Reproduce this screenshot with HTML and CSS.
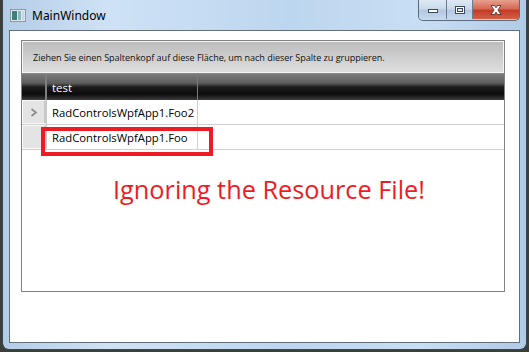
FILE: index.html
```html
<!DOCTYPE html>
<html>
<head>
<meta charset="utf-8">
<link rel="stylesheet" href="styles.css">
</head>
<body>
<div class="window">
  <div class="titlebar">
    <div class="title">
      <svg class="appicon" width="16" height="13" viewBox="0 0 16 13">
        <rect x="0.5" y="0.5" width="15" height="12" fill="#dfe6ec" stroke="#8a98a6"/>
        <rect x="2" y="2" width="5" height="9" fill="#3f7f78"/>
        <rect x="8" y="2" width="3" height="9" fill="#8fb4c7"/>
        <rect x="12" y="2" width="2" height="9" fill="#c7d6df"/>
      </svg>
      <span>MainWindow</span>
    </div>
    <div class="caption-buttons">
      <div class="cbtn min"><svg width="12" height="8" viewBox="0 0 12 8"><rect x="1.5" y="3.5" width="9" height="3" fill="#fff" stroke="#3a4a5c"/></svg></div>
      <div class="cbtn max"><svg width="12" height="10" viewBox="0 0 12 10"><rect x="1.5" y="1.5" width="9" height="7" fill="#fff" stroke="#3a4a5c"/><rect x="3.5" y="3.5" width="5" height="3" fill="#dfe8f2" stroke="#3a4a5c"/></svg></div>
      <div class="cbtn close"><svg width="16" height="12" viewBox="0 0 16 12"><path d="M3 1.5 L6.5 1.5 L8 3.8 L9.5 1.5 L13 1.5 L10 6 L13 10.5 L9.5 10.5 L8 8.2 L6.5 10.5 L3 10.5 L6 6 Z" fill="#fff" stroke="#4a2222" stroke-width="0.8" stroke-linejoin="round"/></svg></div>
    </div>
  </div>
  <div class="client">
    <div class="grid">
      <div class="grouppanel">Ziehen Sie einen Spaltenkopf auf diese Fläche, um nach dieser Spalte zu gruppieren.</div>
      <div class="header">
        <div class="ind hind"></div>
        <div class="hcell">test</div>
        <div class="hfill"></div>
      </div>
      <div class="row">
        <div class="ind rind"><svg width="8" height="9" viewBox="0 0 8 9"><path d="M1.5 1 L6 4.5 L1.5 8" fill="none" stroke="#8a8a8a" stroke-width="1.6"/></svg></div>
        <div class="cell">RadControlsWpfApp1.Foo2</div>
        <div class="fill"></div>
      </div>
      <div class="row">
        <div class="ind rind"></div>
        <div class="cell">RadControlsWpfApp1.Foo</div>
        <div class="fill"></div>
        <div class="mark"></div>
      </div>
      <div class="note">Ignoring the Resource File!</div>
    </div>
  </div>
</div>
</body>
</html>
```
FILE: styles.css
```css
html, body {
  margin: 0;
  padding: 0;
}
body {
  width: 529px;
  height: 352px;
  background: #3b3f3a;
  font-family: "Open Sans", "Noto Sans", sans-serif;
  overflow: hidden;
}
.window {
  box-sizing: border-box;
  margin-left: 2px;
  width: 525px;
  height: 350px;
  border: 1px solid #3c4652;
  border-top: none;
  border-radius: 0 0 7px 7px;
  background: linear-gradient(90deg, #b3cde6 0%, #cfe2f5 20%, #bcd6ef 55%, #c8def3 80%, #b0cbe6 100%);
  padding: 0 6px 6px 6px;
  display: flex;
  flex-direction: column;
}
.titlebar {
  height: 30px;
  display: flex;
  justify-content: space-between;
  align-items: flex-start;
}
.title {
  display: flex;
  align-items: center;
  gap: 6px;
  padding-top: 7px;
  padding-left: 1px;
  font-size: 12px;
  color: #000;
  font-family: "Noto Sans", sans-serif;
}
.appicon { display: block; }
.caption-buttons {
  display: flex;
  height: 20px;
  border: 1px solid #5b6b7e;
  border-top: none;
  border-radius: 0 0 5px 5px;
  overflow: hidden;
}
.cbtn {
  height: 19px;
  display: flex;
  align-items: center;
  justify-content: center;
  background: linear-gradient(#dfe9f5 0%, #c9d9ec 45%, #b4c8df 55%, #c6d8ee 100%);
}
.cbtn.min { width: 27px; border-right: 1px solid #6c7d92; }
.cbtn.max { width: 25px; border-right: 1px solid #6c7d92; }
.cbtn.close {
  width: 46px;
  background: linear-gradient(#e6a08f 0%, #d66a55 45%, #c23c26 55%, #d25f45 100%);
}
.client {
  flex: 1;
  background: #fff;
  border: 1px solid #636e7c;
  padding: 9px 14px 50px 11px;
  display: flex;
}
.grid {
  flex: 1;
  border: 1px solid #828282;
  position: relative;
  display: flex;
  flex-direction: column;
  font-family: "Open Sans", sans-serif;
}
.grouppanel {
  height: 30px;
  border: 1px solid #f4f4f4;
  background: linear-gradient(#bdbdbd, #dedede);
  font-size: 9.1px;
  color: #111;
  display: flex;
  align-items: center;
  padding-left: 10px;
  letter-spacing: -0.05px;
  white-space: nowrap;
}
.header {
  height: 27px;
  display: flex;
  background: linear-gradient(#7a7a7a 0%, #5e5e5e 35%, #1c1c1c 50%, #0c0c0c 78%, #3e3e3e 100%);
  border-top: 1px solid #8a8a8a;
  box-sizing: border-box;
}
.ind {
  width: 25px;
  flex: none;
  box-sizing: border-box;
}
.hind {
  border-right: 2px solid #7d7d7d;
}
.hcell {
  width: 151px;
  box-sizing: border-box;
  color: #fff;
  font-size: 11.5px;
  padding-left: 5px;
  display: flex;
  align-items: center;
  border-right: 1px solid #7a7a7a;
}
.hfill { flex: 1; }
.row {
  height: 25px;
  display: flex;
  box-sizing: border-box;
  border-bottom: 1px solid #d0d0d0;
  position: relative;
}
.rind {
  background: #e4e4e4;
  border: 1px solid #fafafa;
  border-right: 3px solid #c8c8c8;
  display: flex;
  align-items: center;
  justify-content: center;
}
.rind svg { display: block; }
.cell {
  width: 151px;
  box-sizing: border-box;
  border-right: 1px solid #d0d0d0;
  font-size: 11.3px;
  color: #000;
  display: flex;
  align-items: center;
  padding-left: 5px;
  white-space: nowrap;
}
.fill { flex: 1; }
.mark {
  position: absolute;
  left: 19px;
  top: 2px;
  width: 164px;
  height: 21px;
  border: 4px solid #ed1c24;
}
.note {
  margin-top: 22px;
  text-align: center;
  padding-left: 12px;
  color: #ec1c24;
  font-size: 25.3px;
  font-family: "Open Sans", sans-serif;
}
```
